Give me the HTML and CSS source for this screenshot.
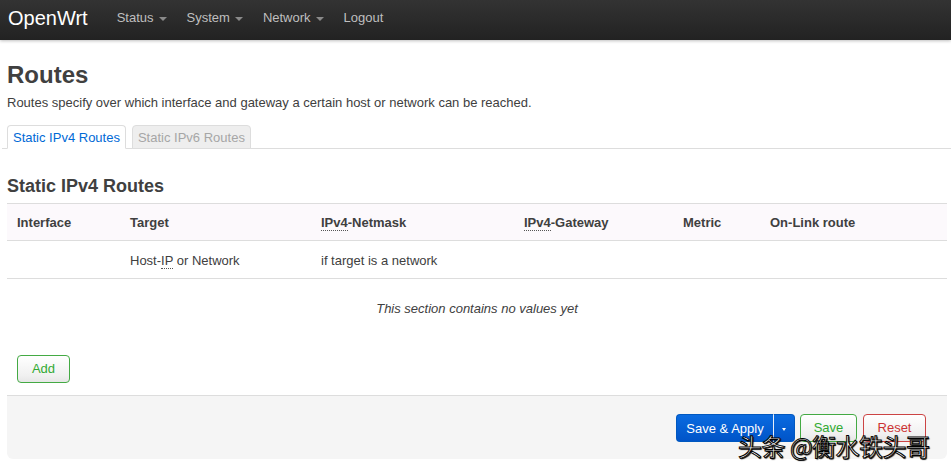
FILE: index.html
```html
<!DOCTYPE html>
<html>
	<head>
		<meta http-equiv="content-type" content="text/html;charset=UTF-8" />
		<title>OpenWrt - Routes</title>
		<link rel="stylesheet" href="styles.css">
	</head>

	<body>
		<header class="topbar">
			<a class="brand" href="#">OpenWrt</a>
			<ul class="nav">
				<li><a href="#">Status<span class="caret"></span></a></li>
				<li><a href="#">System<span class="caret"></span></a></li>
				<li><a href="#">Network<span class="caret"></span></a></li>
				<li><a href="#">Logout</a></li>
			</ul>
		</header>

		<div class="container">
			<h2 class="pageTitle">Routes</h2>
			<div class="pageDesc">Routes specify over which interface and gateway a certain host or network can be reached.</div>

			<ul class="tabs">
				<li class="active"><a href="#">Static IPv4 Routes</a></li>
				<li><a href="#">Static IPv6 Routes</a></li>
			</ul>

			<div class="section">
				<h3 class="sectionTitle">Static IPv4 Routes</h3>
				<table class="routeTable">
					<colgroup>
						<col class="c1"><col class="c2"><col class="c3"><col class="c4"><col class="c5"><col class="c6">
					</colgroup>
					<tr class="head">
						<th>Interface</th>
						<th>Target</th>
						<th><abbr>IPv4</abbr>-Netmask</th>
						<th><abbr>IPv4</abbr>-Gateway</th>
						<th>Metric</th>
						<th>On-Link route</th>
					</tr>
					<tr class="desc">
						<td></td>
						<td>Host-<abbr>IP</abbr> or Network</td>
						<td>if target is a network</td>
						<td></td>
						<td></td>
						<td></td>
					</tr>
					<tr class="empty">
						<td colspan="6">This section contains no values yet</td>
					</tr>
				</table>
				<div class="addRow">
					<button class="btn btnAdd">Add</button>
				</div>
			</div>

			<div class="actions">
				<div class="applyGroup">
					<button class="applyMain">Save &amp; Apply</button><button class="applyDrop"><span class="caretSmall"></span></button>
				</div>
				<button class="btn btnSave">Save</button>
				<button class="btn btnReset">Reset</button>
			</div>
		</div>

		<div class="watermark">头条 @衡水铁头哥</div>
	</body>
</html>
```

FILE: styles.css
```css
body{
	margin: 0;
	font-family: "Liberation Sans", Arial, sans-serif;
	font-size: 13px;
	line-height: 18px;
	color: #404040;
	background: #fff;
	position: relative;
	min-height: 474px;
}
a{
	text-decoration: none;
}

/* top bar */
.topbar{
	height: 40px;
	display: flex;
	align-items: flex-start;
	background: linear-gradient(#333333, #222222);
	box-shadow: 0 1px 3px rgba(0,0,0,0.25);
}
.brand{
	font-size: 20px;
	color: #fff;
	padding-left: 8px;
	margin-right: 19px;
	line-height: 36px;
}
.nav{
	display: flex;
	list-style: none;
	margin: 0;
	padding: 0;
}
.nav a{
	display: block;
	padding: 0 10px;
	line-height: 36px;
	color: #bfbfbf;
}
.caret{
	display: inline-block;
	width: 0;
	height: 0;
	margin-left: 5px;
	vertical-align: middle;
	border-top: 4px solid #8a8a8a;
	border-left: 4px solid transparent;
	border-right: 4px solid transparent;
}

/* page */
.container{
	width: 940px;
	margin-left: 7px;
}
.pageTitle{
	margin: 17px 0 0;
	font-size: 24px;
	line-height: 36px;
	font-weight: bold;
}
.pageDesc{
	margin-top: 1px;
}

.tabs{
	list-style: none;
	display: flex;
	margin: 13px 0 0 -5px;
	padding: 0 0 0 5px;
	border-bottom: 1px solid #ddd;
	width: 949px;
}
.tabs li{
	margin-right: 6px;
	margin-bottom: -1px;
}
.tabs a{
	display: block;
	padding: 3px 5px 1px;
	border: 1px solid #ddd;
	border-radius: 4px 4px 0 0;
	background: #eee;
	color: #a6a6a6;
}
.tabs .active a{
	background: #fff;
	color: #0069d6;
	border-bottom-color: #fff;
}

.sectionTitle{
	margin: 24px 0 3px;
	font-size: 18px;
	line-height: 27px;
	font-weight: bold;
}
.routeTable{
	width: 940px;
	table-layout: fixed;
	border-collapse: collapse;
}
.c1{ width: 113px; }
.c2{ width: 191px; }
.c3{ width: 203px; }
.c4{ width: 159px; }
.c5{ width: 87px; }
.c6{ width: 187px; }
.routeTable th, .routeTable td{
	text-align: left;
	padding: 0 10px;
}
.routeTable .head{
	height: 37px;
	background: #fcf9fc;
	border-top: 1px solid #ddd;
	border-bottom: 1px solid #ddd;
}
.routeTable .head th{
	font-weight: bold;
	padding-top: 1px;
}
.routeTable .desc{
	border-bottom: 1px solid #ddd;
}
.routeTable .desc td{
	height: 38px;
	padding-top: 3px;
	box-sizing: border-box;
}
.routeTable .empty td{
	text-align: center;
	font-style: italic;
	height: 60px;
	padding-bottom: 1px;
}
abbr{
	text-decoration: none;
	border-bottom: 1px dotted #555;
}

.addRow{
	padding: 15px 10px 12px;
}
.btn{
	font-family: "Liberation Sans", Arial, sans-serif;
	font-size: 13px;
	line-height: 18px;
	height: 28px;
	padding: 0 13px;
	border-radius: 4px;
	border: 1px solid #ccc;
	background: linear-gradient(#ffffff, #f0f0f0 75%, #e6e6e6);
	cursor: pointer;
}
.btnAdd{
	width: 53px;
	border-color: #4a4;
	color: #3a3;
}

.actions{
	display: flex;
	justify-content: flex-end;
	align-items: flex-start;
	height: 64px;
	box-sizing: border-box;
	padding: 18px 21px 0 0;
	background: #f5f5f5;
	border-top: 1px solid #ddd;
	border-radius: 0 0 6px 6px;
}
.applyGroup{
	display: flex;
	margin-right: 5px;
}
.applyMain, .applyDrop{
	font-family: "Liberation Sans", Arial, sans-serif;
	font-size: 13px;
	height: 28px;
	border: 1px solid #0058c0;
	background: linear-gradient(#0a6be0, #0054c8);
	color: #fff;
	cursor: pointer;
}
.applyMain{
	width: 98px;
	padding: 0;
	border-radius: 4px 0 0 4px;
	border-right: 1px solid #e8eef8;
}
.applyDrop{
	width: 21px;
	padding: 0;
	border-left: 0;
	border-radius: 0 4px 4px 0;
}
.caretSmall{
	display: inline-block;
	vertical-align: middle;
	border-top: 3px solid #fff;
	border-left: 2px solid transparent;
	border-right: 2px solid transparent;
}
.btnSave{
	width: 57px;
	padding: 0;
	margin-right: 6px;
	border-color: #4a4;
	color: #3a3;
}
.btnReset{
	width: 63px;
	padding: 0;
	border-color: #c44;
	color: #c33;
}

/* overlay watermark from the screenshot */
.watermark{
	position: absolute;
	left: 738px;
	top: 431px;
	font-family: "Noto Sans CJK SC", sans-serif;
	font-size: 24px;
	line-height: 30px;
	color: #fff;
	-webkit-text-stroke: 1px #000;
	text-shadow: 1px 1px 1px #000;
	letter-spacing: -0.5px;
}
```
